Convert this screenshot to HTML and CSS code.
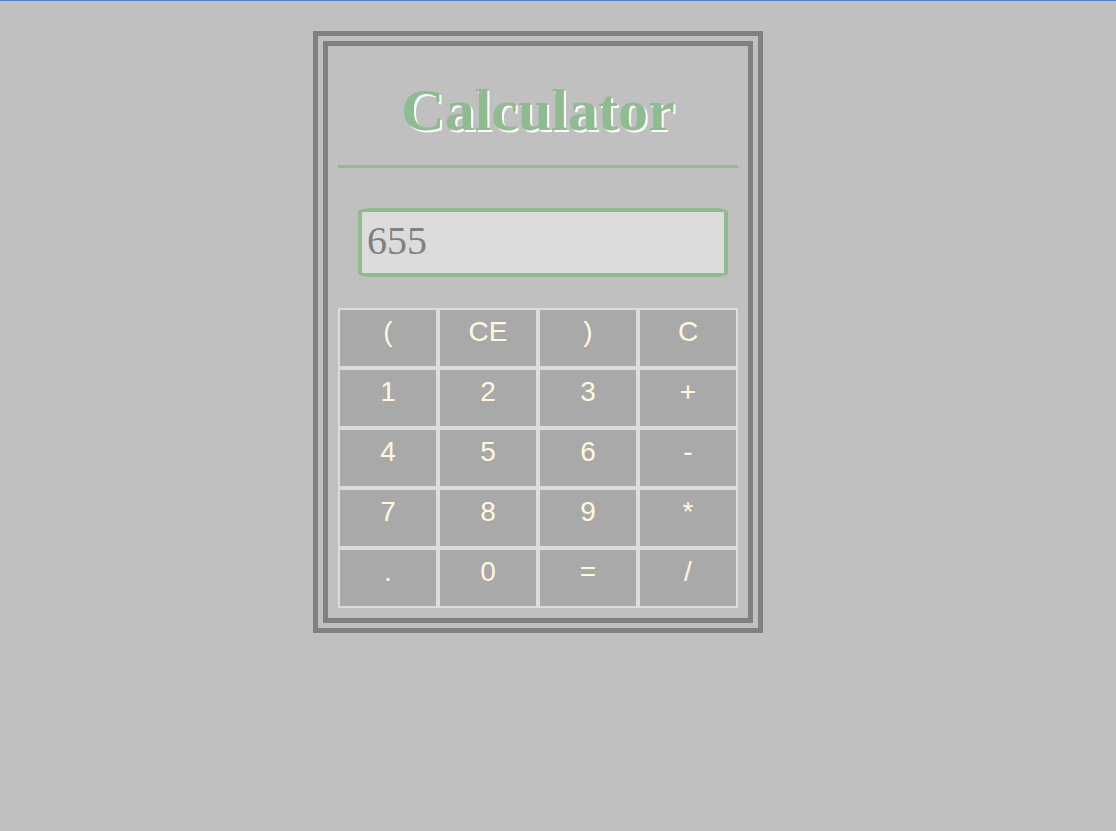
FILE: index.html
```html
<!DOCTYPE html>
<html>
<head>
<meta charset="utf-8">
<title>Calculator</title>
<link rel="stylesheet" href="styles.css">
</head>
<body>
<div class="calc">
  <h1 class="title">Calculator</h1>
  <hr class="rule">
  <input class="display" type="text" value="655">
  <div class="keys">
    <button class="key">(</button>
    <button class="key">CE</button>
    <button class="key">)</button>
    <button class="key">C</button>
    <button class="key">1</button>
    <button class="key">2</button>
    <button class="key">3</button>
    <button class="key">+</button>
    <button class="key">4</button>
    <button class="key">5</button>
    <button class="key">6</button>
    <button class="key">-</button>
    <button class="key">7</button>
    <button class="key">8</button>
    <button class="key">9</button>
    <button class="key">*</button>
    <button class="key">.</button>
    <button class="key">0</button>
    <button class="key">=</button>
    <button class="key">/</button>
  </div>
</div>
</body>
</html>
```
FILE: styles.css
```css
html {
  background: #c0c0c0;
}
body {
  margin: 0;
  border-top: 1px solid #4f81c4;
  background: #c0c0c0;
  min-height: 830px;
}
.calc {
  width: 400px;
  margin: 30px 0 0 313px;
  padding: 0 10px 10px;
  border: 15px double #808080;
}
.title {
  margin: 30px 0 20px;
  text-align: center;
  font-family: "Liberation Serif", serif;
  font-weight: bold;
  font-size: 60px;
  line-height: 69px;
  color: #8fbc8f;
  text-shadow: 2px 2px 0 #ffffff;
}
.rule {
  margin: 0;
  border: none;
  height: 3px;
  background: #8fbc8f;
}
.display {
  display: block;
  box-sizing: border-box;
  width: 370px;
  height: 69px;
  margin: 40px 0 31px 20px;
  padding: 0 5px 4px;
  border: 4px solid #8fbc8f;
  border-radius: 14px / 4px;
  background: #dcdcdc;
  color: #808080;
  font-family: "Liberation Serif", serif;
  font-size: 40px;
  outline: none;
}
.keys {
  display: grid;
  grid-template-columns: repeat(4, 100px);
}
.key {
  box-sizing: border-box;
  height: 60px;
  margin: 0;
  padding: 0 0 12px;
  border: 2px solid #dcdcdc;
  border-radius: 0;
  background: #a9a9a9;
  color: #fff8dc;
  font-family: "Liberation Sans", Arial, sans-serif;
  font-size: 28px;
  line-height: 32px;
}
```
